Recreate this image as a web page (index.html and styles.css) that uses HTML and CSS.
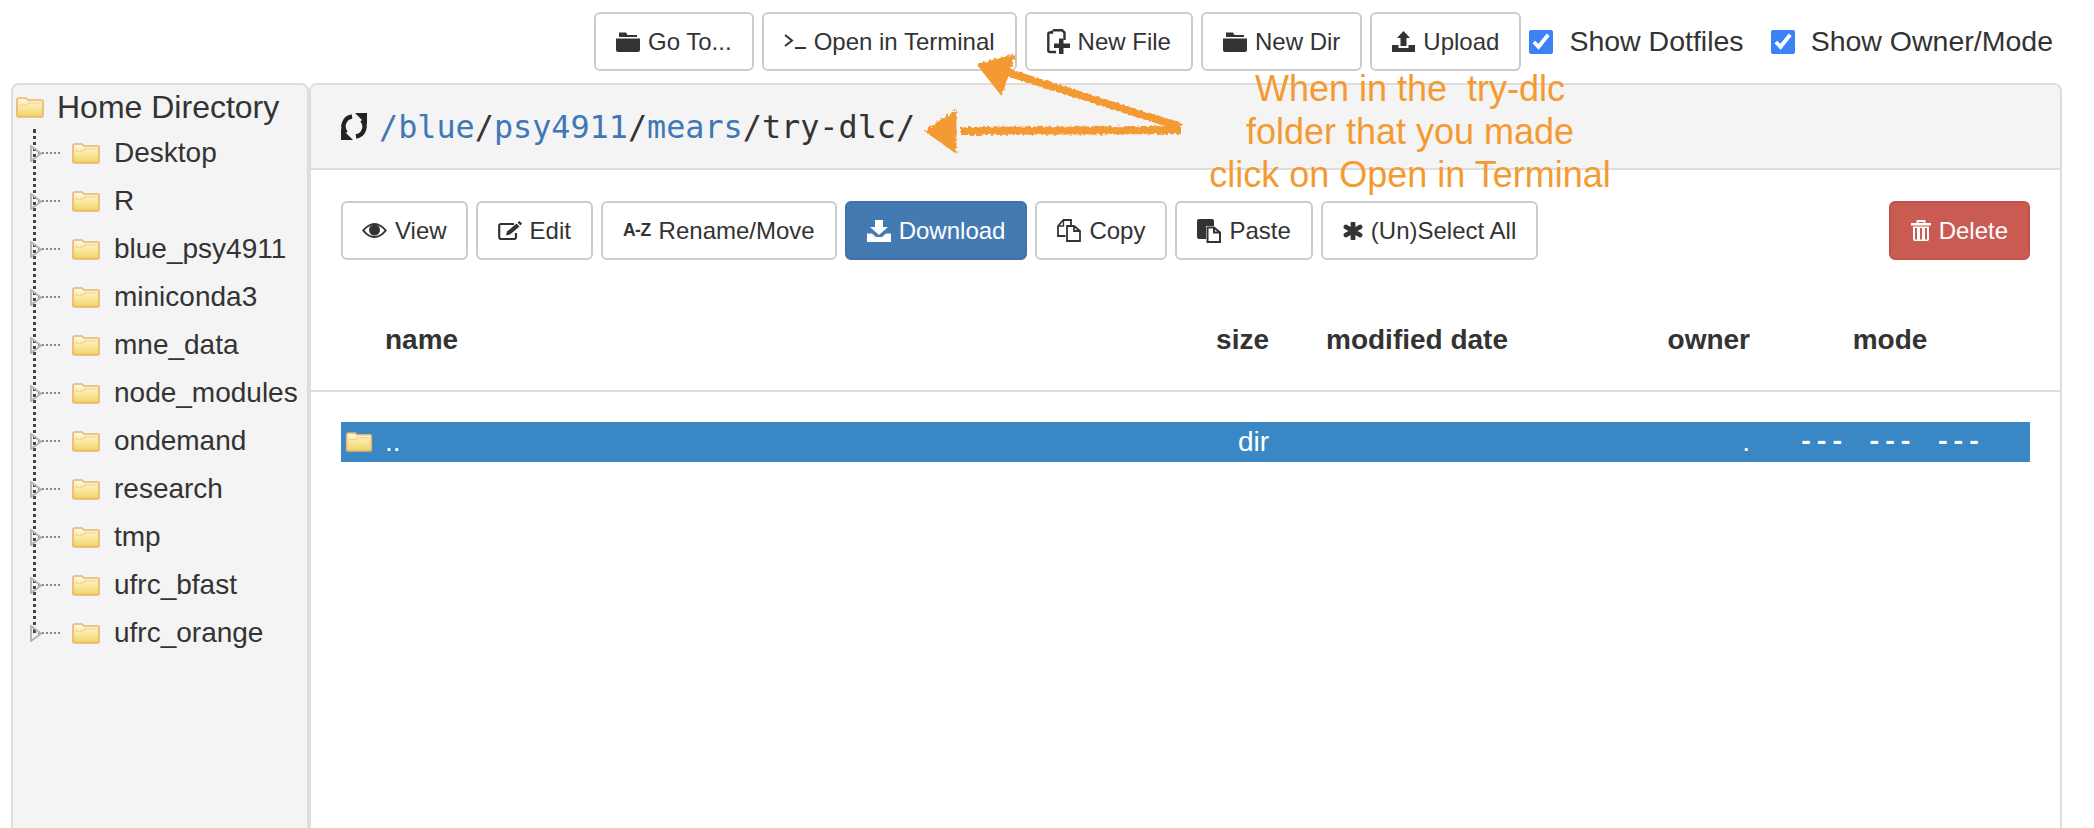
FILE: index.html
```html
<!DOCTYPE html>
<html lang="en">
<head>
  <meta charset="UTF-8">
  <meta name="viewport" content="width=device-width, initial-scale=1.0">
  <title>File Explorer</title>
  <link rel="stylesheet" href="styles.css">
</head>
<body>
  <svg class="sprite" xmlns="http://www.w3.org/2000/svg">
    <defs>
      <linearGradient id="folderFill" x1="0" y1="0" x2="0" y2="1">
        <stop offset="0" stop-color="#fdf6de"/>
        <stop offset="0.45" stop-color="#fbeaa8"/>
        <stop offset="1" stop-color="#f3d160"/>
      </linearGradient>
      <filter id="rough" x="-5%" y="-20%" width="110%" height="140%">
        <feTurbulence type="fractalNoise" baseFrequency="0.35" numOctaves="2" seed="4"/>
        <feDisplacementMap in="SourceGraphic" scale="5"/>
      </filter>
      <symbol id="i-tree-folder" viewBox="0 0 28 21">
        <path d="M1 3 Q1 1 3 1 H10 L12 3 H25.500 Q27 3 27 4.500 V18.500 Q27 20 25.500 20 H2.500 Q1 20 1 18.500 Z" fill="url(#folderFill)" stroke="#e8b46f" stroke-width="1.600"/>
        <path d="M3 8 H11 L13 6 H25" fill="none" stroke="#f0cf84" stroke-width="1.200"/>
      </symbol>
      <symbol id="i-folder" viewBox="0 0 24 20">
        <path d="M3 0.500 H10 L11.500 3 H21 V5 H3 Z"/>
        <path d="M0 6.500 H24 V18 Q24 20 22 20 H2 Q0 20 0 18 Z"/>
      </symbol>
      <symbol id="i-terminal" viewBox="0 0 22 15">
        <path d="M1 1 L8 6.500 L1 12" fill="none" stroke="currentColor" stroke-width="2"/>
        <path d="M11 14 H22" fill="none" stroke="currentColor" stroke-width="2"/>
      </symbol>
      <symbol id="i-newfile" viewBox="0 0 23 25">
        <path d="M6 1.200 H15 L17.500 3.500 V11 M9 23 H3 Q1.300 23 1.300 21.500 V5 Q1.300 3.500 3 3.500 H5 V1.500" fill="none" stroke="currentColor" stroke-width="2.400"/>
        <path d="M12 9.500 H16.500 V14.500 H23 V19 H16.500 V25 H12 V19 H7 V14.500 H12 Z"/>
      </symbol>
      <symbol id="i-upload" viewBox="0 0 23 21">
        <path d="M11.500 0 L18 7 H14.500 V15 H8.500 V7 H5 Z"/>
        <path d="M0 14 H6.500 V17 H16.500 V14 H23 V21 H0 Z"/>
      </symbol>
      <symbol id="i-download" viewBox="0 0 24 22">
        <path d="M8 0 H16 V7 H21 L12 15 L3 7 H8 Z"/>
        <path d="M0 13.500 H5 L9 17 H15 L19 13.500 H24 V22 H0 Z"/>
      </symbol>
      <symbol id="i-eye" viewBox="0 0 25 15">
        <path fill-rule="evenodd" d="M0 7.500 Q6 0 12.500 0 Q19 0 25 7.500 Q19 15 12.500 15 Q6 15 0 7.500 Z M2.500 7.500 Q7 13 12.500 13 Q18 13 22.500 7.500 Q18 2 12.500 2 Q7 2 2.500 7.500 Z"/>
        <circle cx="12.500" cy="7" r="5.500"/>
      </symbol>
      <symbol id="i-edit" viewBox="0 0 24 19">
        <path d="M18 12 V16 Q18 18 16 18 H3 Q1.200 18 1.200 16 V5 Q1.200 3 3 3 H16" fill="none" stroke="currentColor" stroke-width="2.200"/>
        <path d="M9 10.500 L18.500 2.500 L21.500 5.500 L12 13.500 L8 14.500 Z"/>
        <path d="M19.500 1.500 L21.500 0 L24 2.500 L22.500 4.500 Z"/>
      </symbol>
      <symbol id="i-copy" viewBox="0 0 24 23">
        <path d="M8.500 17 H1 V7 L6.500 1 H14 V6" fill="none" stroke="currentColor" stroke-width="1.800"/>
        <path d="M6.500 1 V7 H1" fill="none" stroke="currentColor" stroke-width="1.300"/>
        <path d="M10 22 V7 H17 L23 12 V22 Z M17 7 V12 H23" fill="none" stroke="currentColor" stroke-width="1.800"/>
      </symbol>
      <symbol id="i-paste" viewBox="0 0 24 24">
        <path d="M0 2 Q0 0 2 0 H15 Q17 0 17 2 V7 H9 V20 H2 Q0 20 0 18 Z"/>
        <path d="M10.500 8.500 H17 L23 13.500 V23 H10.500 Z M17 8.500 V13.500 H23" fill="#fff" stroke="currentColor" stroke-width="2"/>
      </symbol>
      <symbol id="i-asterisk" viewBox="0 0 20 18">
        <path d="M10 1.500 V16.500 M3 5 L17 13 M3 13 L17 5" fill="none" stroke="currentColor" stroke-width="4.800" stroke-linecap="round"/>
      </symbol>
      <symbol id="i-trash" viewBox="0 0 20 21">
        <path d="M6.500 3 V1 H13.500 V3" fill="none" stroke="currentColor" stroke-width="1.800"/>
        <path d="M0 3 H20 V5.500 H0 Z"/>
        <path fill-rule="evenodd" d="M2 6.500 H18 V19 Q18 21 16 21 H4 Q2 21 2 19 Z M4 8 V19.500 H6 V8 Z M9 8 V19.500 H11 V8 Z M14 8 V19.500 H16 V8 Z"/>
      </symbol>
      <symbol id="i-refresh" viewBox="0 0 28 27">
        <path d="M12 3.500 A10 10 0 0 0 6 20" fill="none" stroke="currentColor" stroke-width="4.400"/>
        <path d="M1 15 V27 H13 Z"/>
        <path d="M16 23.500 A10 10 0 0 0 22 7" fill="none" stroke="currentColor" stroke-width="4.400"/>
        <path d="M15 0 H27 V12 Z"/>
      </symbol>
      <symbol id="i-caret" viewBox="0 0 12 17">
        <path d="M1 1 L11 8.500 L1 16 Z" fill="none" stroke="#b5b5b5" stroke-width="2"/>
      </symbol>
    </defs>
  </svg>

  <header class="toolbar">
    <button class="btn"><svg class="ico ico-folder"><use href="#i-folder"/></svg>Go To...</button>
    <button class="btn"><svg class="ico ico-term"><use href="#i-terminal"/></svg>Open in Terminal</button>
    <button class="btn"><svg class="ico ico-new"><use href="#i-newfile"/></svg>New File</button>
    <button class="btn"><svg class="ico ico-folder"><use href="#i-folder"/></svg>New Dir</button>
    <button class="btn"><svg class="ico ico-up"><use href="#i-upload"/></svg>Upload</button>
    <label class="check"><input type="checkbox" checked>Show Dotfiles</label>
    <label class="check check-last"><input type="checkbox" checked>Show Owner/Mode</label>
  </header>

  <main class="layout">
    <aside class="tree">
      <div class="tree-root"><svg class="tree-folder"><use href="#i-tree-folder"/></svg>Home Directory</div>
      <ul class="tree-list">
        <li><svg class="caret"><use href="#i-caret"/></svg><svg class="tree-folder"><use href="#i-tree-folder"/></svg>Desktop</li>
        <li><svg class="caret"><use href="#i-caret"/></svg><svg class="tree-folder"><use href="#i-tree-folder"/></svg>R</li>
        <li><svg class="caret"><use href="#i-caret"/></svg><svg class="tree-folder"><use href="#i-tree-folder"/></svg>blue_psy4911</li>
        <li><svg class="caret"><use href="#i-caret"/></svg><svg class="tree-folder"><use href="#i-tree-folder"/></svg>miniconda3</li>
        <li><svg class="caret"><use href="#i-caret"/></svg><svg class="tree-folder"><use href="#i-tree-folder"/></svg>mne_data</li>
        <li><svg class="caret"><use href="#i-caret"/></svg><svg class="tree-folder"><use href="#i-tree-folder"/></svg>node_modules</li>
        <li><svg class="caret"><use href="#i-caret"/></svg><svg class="tree-folder"><use href="#i-tree-folder"/></svg>ondemand</li>
        <li><svg class="caret"><use href="#i-caret"/></svg><svg class="tree-folder"><use href="#i-tree-folder"/></svg>research</li>
        <li><svg class="caret"><use href="#i-caret"/></svg><svg class="tree-folder"><use href="#i-tree-folder"/></svg>tmp</li>
        <li><svg class="caret"><use href="#i-caret"/></svg><svg class="tree-folder"><use href="#i-tree-folder"/></svg>ufrc_bfast</li>
        <li><svg class="caret"><use href="#i-caret"/></svg><svg class="tree-folder"><use href="#i-tree-folder"/></svg>ufrc_orange</li>
      </ul>
    </aside>

    <section class="panel">
      <div class="panel-head">
        <svg class="ico-refresh"><use href="#i-refresh"/></svg>
        <div class="path"><a href="#">/blue</a>/<a href="#">psy4911</a>/<a href="#">mears</a>/try-dlc/</div>
      </div>

      <div class="actions">
        <button class="btn btn-view"><svg class="ico ico-eye"><use href="#i-eye"/></svg>View</button>
        <button class="btn"><svg class="ico ico-edit"><use href="#i-edit"/></svg>Edit</button>
        <button class="btn"><span class="az">A-Z</span>Rename/Move</button>
        <button class="btn btn-primary"><svg class="ico ico-down"><use href="#i-download"/></svg>Download</button>
        <button class="btn"><svg class="ico ico-copy"><use href="#i-copy"/></svg>Copy</button>
        <button class="btn"><svg class="ico ico-paste"><use href="#i-paste"/></svg>Paste</button>
        <button class="btn"><svg class="ico ico-star"><use href="#i-asterisk"/></svg>(Un)Select All</button>
        <button class="btn btn-danger"><svg class="ico ico-trash"><use href="#i-trash"/></svg>Delete</button>
      </div>

      <div class="file-head">
        <div class="file-cols">
          <span></span>
          <span>name</span>
          <span class="col-right">size</span>
          <span class="col-date">modified date</span>
          <span class="col-right">owner</span>
          <span class="col-center">mode</span>
        </div>
      </div>

      <div class="file-cols file-row">
        <svg class="row-folder"><use href="#i-tree-folder"/></svg>
        <span>..</span>
        <span class="col-right">dir</span>
        <span class="col-date"></span>
        <span class="col-right">.</span>
        <span class="col-center perms">--- --- ---</span>
      </div>
    </section>
  </main>

  <!-- annotation drawn over the screenshot -->
  <div class="note">When in the&nbsp; try-dlc<br>folder that you made<br>click on Open in Terminal</div>
  <svg class="arrows" xmlns="http://www.w3.org/2000/svg" viewBox="0 0 1200 170">
    <g filter="url(#rough)" fill="#f49a32" stroke="#f49a32">
      <path d="M1181 127 L1000 70" fill="none" stroke-width="8"/>
      <path d="M960 131 L1181 130" fill="none" stroke-width="8"/>
      <path d="M1014 56 L979 65 L1001 93 Z" stroke-width="3"/>
      <path d="M927 131 L955 112 L955 151 Z" stroke-width="3"/>
    </g>
  </svg>
</body>
</html>
```

FILE: styles.css
```css
html, body {
  height: 100%;
}

body {
  margin: 0;
  overflow: hidden;
  font-family: "Liberation Sans", Arial, sans-serif;
  color: #333;
  background-color: #fff;
}

.sprite {
  display: block;
  width: 0;
  height: 0;
}

/* top bar */
.toolbar {
  display: flex;
  justify-content: flex-end;
  align-items: center;
  gap: 8px;
  height: 83px;
  padding: 0 41px 0 0;
  box-sizing: border-box;
}

.btn {
  display: inline-flex;
  align-items: center;
  justify-content: center;
  gap: 8px;
  height: 59px;
  padding: 0 20px;
  font-family: inherit;
  font-size: 24px;
  color: #333;
  background-color: #fff;
  border: 2px solid #ccc;
  border-radius: 6px;
}

.btn-view {
  padding: 0 19px;
}

.btn-primary {
  color: #fff;
  background-color: #447ab2;
  border-color: #3f70a6;
}

.btn-danger {
  margin-left: auto;
  color: #fff;
  background-color: #c95b53;
  border-color: #c2524a;
}

.ico {
  fill: currentColor;
  flex: none;
}

.ico-folder { width: 24px; height: 20px; }
.ico-term { width: 22px; height: 15px; }
.ico-new { width: 23px; height: 25px; }
.ico-up { width: 23px; height: 21px; }
.ico-down { width: 24px; height: 22px; }
.ico-eye { width: 25px; height: 15px; }
.ico-edit { width: 24px; height: 19px; }
.ico-copy { width: 24px; height: 23px; }
.ico-paste { width: 24px; height: 24px; }
.ico-star { width: 20px; height: 18px; }
.ico-trash { width: 20px; height: 21px; }

.az {
  font-size: 17.5px;
  font-weight: bold;
  letter-spacing: -0.5px;
}

.check {
  display: flex;
  align-items: center;
  gap: 16px;
  font-size: 28.5px;
}

.check-last {
  margin-left: 19px;
}

.check input {
  width: 24px;
  height: 24px;
  margin: 0;
  accent-color: #3b82f6;
}

/* tree and main panel */
.layout {
  display: flex;
  padding-left: 11px;
  padding-right: 32px;
}

.tree {
  width: 298px;
  height: 800px;
  flex: none;
  box-sizing: border-box;
  background-color: #f4f4f4;
  border: 2px solid #ddd;
  border-radius: 8px 8px 0 0;
  padding: 6px 0 0 3px;
}

.tree-root {
  display: flex;
  align-items: center;
  gap: 13px;
  height: 32px;
  font-size: 32px;
}

.tree-folder {
  width: 28px;
  height: 21px;
  flex: none;
}

.tree-list {
  list-style-type: none;
  margin: 6px 0 0 17px;
  padding: 0;
  border-left: 3px dotted #444;
  height: 504px;
}

.tree-list li {
  position: relative;
  display: flex;
  align-items: center;
  height: 48px;
  padding-left: 36px;
  gap: 14px;
  font-size: 28px;
}

.tree-list li::before {
  content: "";
  width: 22px;
  border-top: 2px dotted #888;
  position: absolute;
  left: 2px;
  top: 23px;
}

.caret {
  position: absolute;
  left: -6px;
  top: 16px;
  width: 12px;
  height: 17px;
}

.panel {
  flex: 1;
  height: 800px;
  box-sizing: border-box;
  border: 2px solid #ddd;
  border-radius: 8px 8px 0 0;
}

.panel-head {
  display: flex;
  align-items: center;
  gap: 11px;
  height: 83px;
  padding-left: 29px;
  background-color: #f4f4f4;
  border-bottom: 2px solid #ddd;
  border-radius: 6px 6px 0 0;
}

.ico-refresh {
  width: 28px;
  height: 27px;
  fill: #222;
  color: #222;
}

.path {
  font-family: "DejaVu Sans Mono", "Liberation Mono", monospace;
  font-size: 31.8px;
  color: #333;
}

.path a {
  color: #3f78b5;
  text-decoration: none;
}

.actions {
  display: flex;
  gap: 8px;
  padding: 31px 30px 0;
}

.file-head {
  padding: 0 30px;
  height: 132px;
  box-sizing: border-box;
  border-bottom: 2px solid #ddd;
  font-weight: bold;
  font-size: 28px;
}

.file-cols {
  display: grid;
  grid-template-columns: 44px 784px 100px 381px 100px 280px;
  align-items: center;
}

.file-head .file-cols {
  padding-top: 64px;
}

.col-right { text-align: right; }
.col-center { text-align: center; }
.col-date { padding-left: 57px; }

.file-row {
  height: 40px;
  margin: 30px 30px 0;
  font-size: 28px;
  color: #fff;
  background-color: #3a87c6;
}

.row-folder {
  width: 28px;
  height: 20px;
  margin-left: 4px;
}

.perms {
  font-family: "Liberation Mono", monospace;
  font-size: 26px;
  font-weight: bold;
  word-spacing: 6px;
  white-space: pre;
}

/* orange annotation on top of the page */
.note {
  position: absolute;
  left: 1110px;
  top: 67px;
  width: 600px;
  text-align: center;
  font-size: 36px;
  line-height: 43px;
  color: #f49a32;
}

.arrows {
  position: absolute;
  left: 0;
  top: 0;
  width: 1200px;
  height: 170px;
}
```
